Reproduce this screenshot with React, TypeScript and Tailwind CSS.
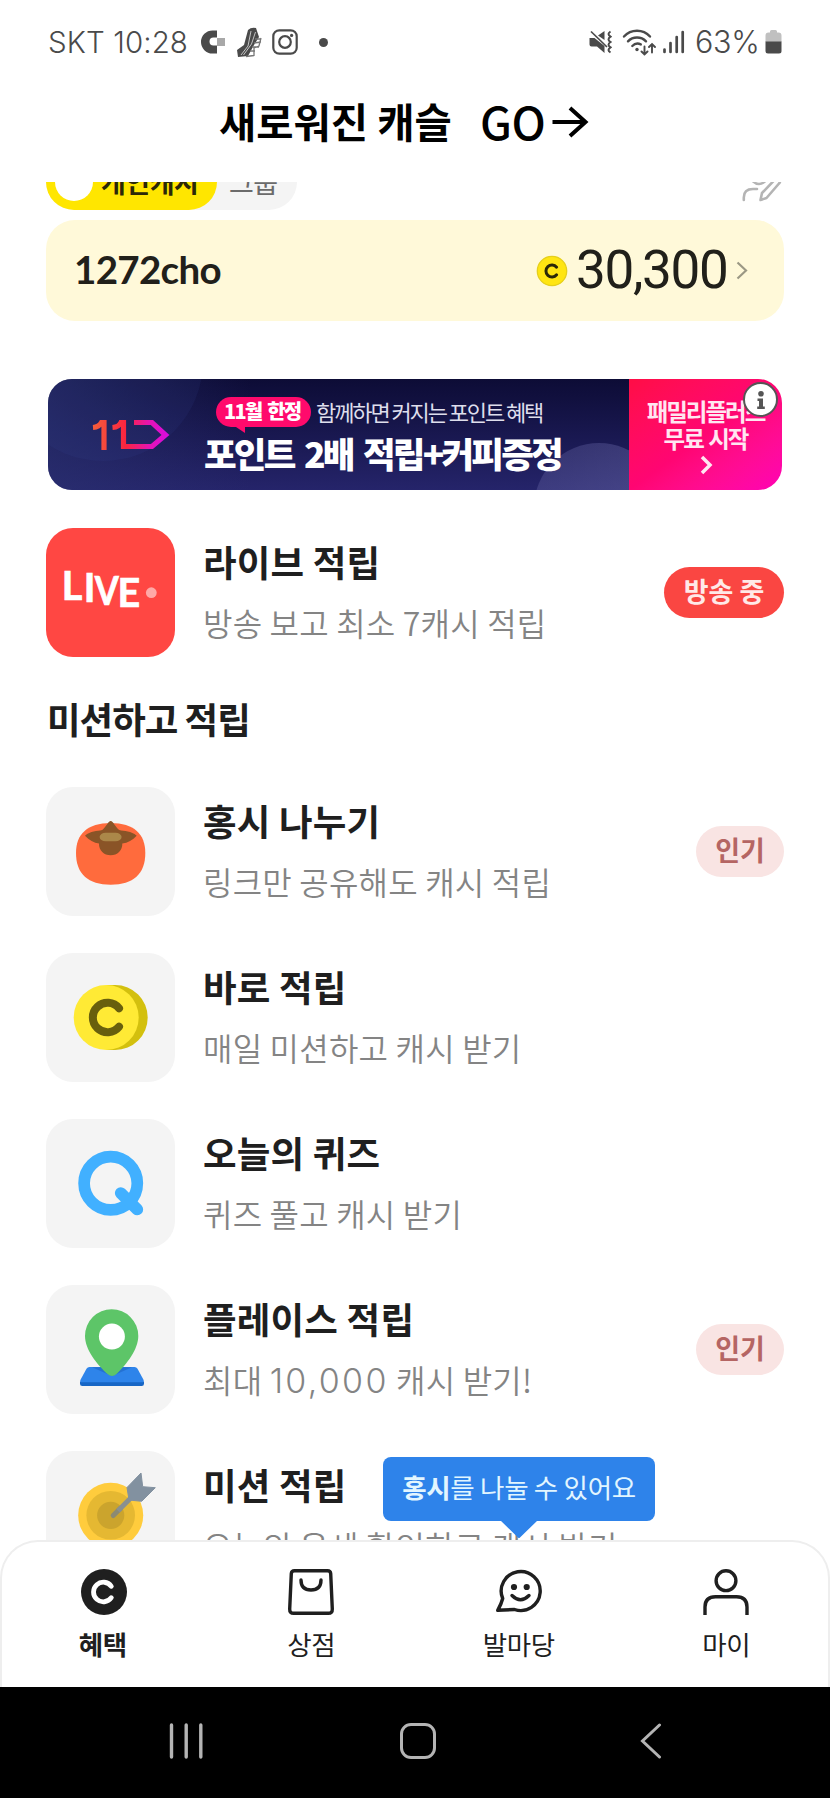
import type { ReactNode } from "react";
import clsx from "clsx";

type Mission = {
  title: string;
  desc: ReactNode;
  icon: ReactNode;
  badge?: string;
};

function LiveIcon() {
  return (
    <svg viewBox="0 0 129 129" className="size-full">
      <g fill="#fff" stroke="#fff" strokeWidth="0.700" fontFamily="Lato, sans-serif" fontWeight="700" fontSize="39.5">
        <text x="15.8" y="71.7">L</text>
        <text x="37.8" y="73.5">I</text>
        <text x="48.8" y="77.3" textLength="24" lengthAdjust="spacingAndGlyphs">V</text>
        <text x="71.4" y="79.4">E</text>
      </g>
      <circle cx="105.3" cy="64.7" r="5.4" fill="#ffa9a7" />
    </svg>
  );
}

function PersimmonIcon() {
  return (
    <svg viewBox="0 0 129 129" className="size-full">
      <path d="M64.7 36C88 36 99.3 47 99.3 66c0 21-12 31.7-34.6 31.7S30 87 30 66c0-19 11.4-30 34.7-30Z" fill="#ff6b3d" />
      <path
        d="M64.7 34c2.500 0 4.500 6 8.500 9 5 1.200 12 .8 17.500 5.700-4 4.500-9 7-14.400 7.800.3 7-5 11.800-11.600 11.800S52.700 63.500 53 56.500C48 55.700 43 53.200 39 48.700 44.500 43.800 51 44.200 56.200 43c4-3 6-9 8.500-9Z"
        fill="#8a5427"
      />
      <rect x="53.600" y="45.700" width="22" height="8.600" rx="6" ry="4.300" fill="#ab8749" />
    </svg>
  );
}

function CoinIcon() {
  return (
    <svg viewBox="0 0 129 129" className="size-full">
      <path d="M60 32h9.200a32.500 32.500 0 0 1 0 65H60Z" fill="#d3c00e" />
      <circle cx="60.200" cy="64.500" r="32.500" fill="#ffea35" />
      <path d="M73 55.300a14.700 14.700 0 1 0 0 18.400" fill="none" stroke="#685f0d" strokeWidth="8" strokeLinecap="round" />
    </svg>
  );
}

function QuizIcon() {
  return (
    <svg viewBox="0 0 129 129" className="size-full" fill="none" stroke="#41b0ff" strokeWidth="11.700" strokeLinecap="round">
      <circle cx="64.700" cy="64.300" r="26.600" />
      <path d="m74.700 74 16.600 16.500" />
    </svg>
  );
}

function PlaceIcon() {
  return (
    <svg viewBox="0 0 129 129" className="size-full">
      <path d="M34 96.500h64v2.200q0 2.300-2.300 2.300H36.300Q34 101 34 98.700Z" fill="#1766c5" />
      <path d="M43.500 82h45q2 0 3 1.700l6 11q1 2.600-1.700 2.600H36.200q-2.700 0-1.700-2.600l6-11q1-1.700 3-1.700Z" fill="#2e84ea" />
      <path d="M46 82.300h40L66 91Z" fill="#2471d2" />
      <path d="M65.700 24.300A26.600 26.600 0 0 0 39 51c0 13.500 12 28.500 22.500 38q4.500 4 9 0C80.500 79.500 92.300 64.500 92.300 51a26.600 26.600 0 0 0-26.600-26.700Z" fill="#5dc568" />
      <circle cx="65.900" cy="51.600" r="13" fill="#fff" />
    </svg>
  );
}

function TargetIcon() {
  return (
    <svg viewBox="0 0 129 129" className="size-full">
      <circle cx="64.700" cy="64.300" r="32.500" fill="#ffcc3d" />
      <circle cx="64.700" cy="64.300" r="24.300" fill="#e5b832" />
      <circle cx="64.700" cy="64.300" r="13.600" fill="#cba42d" />
      <path d="M67.200 64.500 74 57.700" stroke="#8c8a72" strokeWidth="5" strokeLinecap="round" />
      <path d="m72 59.700 14-14" stroke="#8a9090" strokeWidth="5" />
      <path d="M81 36.500 95 22l1.700 13.700 12.600 1L95.700 50.300 83 49Z" fill="#8291a0" stroke="#8291a0" strokeWidth="1" strokeLinejoin="round" />
    </svg>
  );
}

const missions: Mission[] = [
  { title: "홍시 나누기", desc: "링크만 공유해도 캐시 적립", icon: <PersimmonIcon />, badge: "인기" },
  { title: "바로 적립", desc: "매일 미션하고 캐시 받기", icon: <CoinIcon /> },
  { title: "오늘의 퀴즈", desc: "퀴즈 풀고 캐시 받기", icon: <QuizIcon /> },
  {
    title: "플레이스 적립",
    desc: (
      <>
        최대 <span className="font-['Inter'] text-[34px] font-light tracking-[2.300px]">10,000</span> 캐시 받기!
      </>
    ),
    icon: <PlaceIcon />,
    badge: "인기",
  },
  { title: "미션 적립", desc: "오늘의 운세 확인하고 캐시 받기", icon: <TargetIcon /> },
];

function MissionRow({ title, desc, icon, badge, live }: Mission & { live?: boolean }) {
  return (
    <div className="flex h-[129px] shrink-0 items-center">
      <div className={clsx("size-[129px] shrink-0 rounded-[27px]", live ? "bg-[#ff4743]" : "bg-[#f4f4f4]")}>{icon}</div>
      <div className="ml-[28px] flex flex-1 flex-col gap-[18px] pb-[4px] whitespace-nowrap">
        <div className="h-11 text-[36.500px] leading-[44px] font-bold tracking-[0.200px] text-[#1f1f1f]">{title}</div>
        <div className="h-10 text-[32px] leading-10 font-[350] tracking-[0.200px] text-[#848484]">{desc}</div>
      </div>
      {badge && (
        <div
          className={clsx(
            "flex h-[51px] items-center justify-center rounded-full pb-[5px] text-[27px] leading-none font-bold",
            live ? "w-[120px] bg-[#fa4642] text-[#ffe9e8]" : "w-[88px] bg-[#f9e4e3] text-[#b56563]"
          )}
        >
          {badge}
        </div>
      )}
    </div>
  );
}

function StatusBar() {
  return (
    <div className="flex h-[84px] items-center justify-between pr-12 pl-[48px] font-['Inter'] text-[29.500px] text-[#4a4a4a]">
      <div className="flex items-center">
        <span className="w-[153px] font-[350] tracking-[0.100px] whitespace-nowrap">SKT 10:28</span>
        <svg width="25" height="24" viewBox="0 0 25 24">
          <path d="M16 .5h-4.500a11.500 11.500 0 0 0 0 23H16v-8h-3.500a4 4 0 0 1 0-8H16Z" fill="#4a4a4a" />
          <rect x="16" y="8" width="8" height="8" fill="#a8a8a8" />
        </svg>
        <svg width="25" height="31" viewBox="0 0 25 31" className="ml-[11px]">
          <path d="M11 3Q14 0 19 1l3 9-5 8-6 11-10 1-1-7 7-5Z" fill="#4a4a4a" />
          <path d="m14 4-3 15-7 9M18.500 5l-4 12-8 11" stroke="#c4c4c4" strokeWidth="1" fill="none" />
          <path d="m18 12 6 0M17 16l7-1M15 20l7 0M13 24l5 0M9 29.500l8-1M24 11l-2 8-5 2v8" stroke="#777" strokeWidth="1.300" fill="none" />
        </svg>
        <svg width="26" height="26" viewBox="0 0 26 26" fill="none" stroke="#4a4a4a" strokeWidth="2.200" className="ml-[10px]">
          <rect x="1.300" y="1.300" width="23.400" height="23.400" rx="6" />
          <circle cx="13" cy="13" r="5.800" />
          <circle cx="19.600" cy="6.400" r="1.600" fill="#4a4a4a" stroke="none" />
        </svg>
        <span className="ml-[21px] size-[9px] rounded-full bg-[#4a4a4a]" />
      </div>
      <div className="flex items-center">
        <svg width="23" height="24" viewBox="0 0 23 24">
          <path d="M9 5.500 15.500 1v9ZM.5 8h5L15.500 16v7L8 16.500H2.500q-2 0-2-2Z" fill="#4a4a4a" />
          <path d="m2 1.500 16 15.500" stroke="#4a4a4a" strokeWidth="1.700" />
          <path d="M21.500 1.500q-4 2.600 0 5.200-4 2.700 0 5.300-4 2.700 0 5.300-4 2.600 0 5.200" fill="none" stroke="#4a4a4a" strokeWidth="2" />
        </svg>
        <svg width="34" height="27" viewBox="0 0 34 27" fill="none" stroke="#4a4a4a" strokeWidth="2.400" strokeLinecap="round" className="ml-[10px]">
          <path d="M2 7.500a17.500 17.500 0 0 1 26 0M6 12.300a12.500 12.500 0 0 1 18 0M10.300 17a7.500 7.500 0 0 1 8.500-1.600" />
          <circle cx="15" cy="20.500" r="1.700" fill="#4a4a4a" stroke="none" />
          <path d="M22.500 17.500v8m-3-3 3 3 3-3M30 23.500v-8.500m-3 3 3-3 3 3" strokeWidth="1.900" />
        </svg>
        <svg width="23" height="24" viewBox="0 0 23 24" stroke="#4a4a4a" strokeWidth="2.700" strokeLinecap="round" className="ml-[6px]">
          <path d="M2.500 19.500v2.500M8.500 13v9M14.700 7v15M20.700 2v20" />
        </svg>
        <span className="ml-[10px] w-[66px] text-[30.500px] font-[350] tracking-[-0.300px] whitespace-nowrap">63%</span>
        <svg width="17" height="24" viewBox="0 0 17 24" className="ml-[4px]">
          <path d="M5 1.500Q5 0 6.500 0h4Q12 0 12 1.500V2.500h1.500q3 0 3 3V12H.5V5.500q0-3 3-3H5Z" fill="#c0c0c0" />
          <path d="M.5 11.500h16V21q0 2.500-2.500 2.500H3Q.5 23.500.5 21Z" fill="#4a4a4a" />
        </svg>
      </div>
    </div>
  );
}

function Banner() {
  return (
    <div className="relative mx-[2px] mt-[58px] flex h-[111px] shrink-0 overflow-hidden rounded-[24px] text-white">
      <div className="relative flex w-[581px] overflow-hidden bg-linear-to-b from-[#0d0c36] to-[#25246a]">
        <div className="absolute inset-0 bg-linear-to-r from-[#2b3272]/60 via-transparent via-35% to-transparent" />
        <div className="absolute -top-[118px] -left-[45px] size-[200px] rounded-full bg-[#3c4a9c]/12" />
        <div className="absolute top-[64px] left-[486px] size-[130px] rounded-full bg-linear-to-br from-[#6766a6]/30 to-[#6766a6]/60" />
        <svg viewBox="0 0 80 34" width="80" height="34" className="relative mt-[39px] ml-[43px] shrink-0" fill="none" strokeWidth="5.200">
          <defs>
            <linearGradient id="eleven" gradientUnits="userSpaceOnUse" x1="0" y1="0" x2="78" y2="0">
              <stop offset="0" stopColor="#f4603a" />
              <stop offset=".45" stopColor="#fb2440" />
              <stop offset=".75" stopColor="#e414b4" />
              <stop offset="1" stopColor="#d60ce0" />
            </linearGradient>
          </defs>
          <path d="M2 9.500Q8 9 10.500 4.500H13V32M21.500 9.500Q28 9 30 4.500H32.500V28.500H61L74.500 17 61 4.500H43" stroke="url(#eleven)" />
        </svg>
        <div className="relative ml-[33px] flex flex-col whitespace-nowrap">
          <div className="mt-[18px] ml-3 flex h-[30px] items-center">
            <div className="relative flex h-[30px] w-[95px] items-center rounded-full bg-[#ff0a6c] pb-[2px] pl-2">
              <span className="text-[20px] leading-none font-black tracking-[-1.800px] [word-spacing:3px]">11월 한정</span>
              <svg width="12" height="8" className="absolute top-[28px] left-[17px]">
                <path d="M0 0h12v8Z" fill="#ff0a6c" />
              </svg>
            </div>
            <span className="ml-[5px] pb-[2px] text-[22px] leading-none tracking-[-2.100px] text-[#dedeec]">함께하면 커지는 포인트 혜택</span>
          </div>
          <div className="mt-[2px] h-[48px] text-[35.500px] leading-[48px] font-black tracking-[-2.800px] [word-spacing:5px]">포인트 2배 적립+커피증정</div>
        </div>
      </div>
      <div className="flex flex-1 flex-col items-center bg-linear-to-br from-[#ff0d45] via-[#ff0572] to-[#ff00b4] pt-[19px] text-[23.500px] leading-[27px] font-bold tracking-[-2px] [word-spacing:2px] whitespace-nowrap text-[#ffe6f1]">
        <div>패밀리플러스</div>
        <div>무료 시작</div>
        <svg width="14" height="20" viewBox="0 0 14 20" className="mt-[3px]" fill="none" stroke="#ffe6f1" strokeWidth="3.500">
          <path d="m3 2 8 8-8 8" />
        </svg>
      </div>
      <div className="absolute top-[3px] right-[4px] flex size-[35px] items-center justify-center rounded-full border-2 border-[#555] bg-white">
        <svg width="8" height="18" viewBox="0 0 8 18" fill="#555">
          <circle cx="4" cy="2.800" r="2.800" />
          <path d="M.5 7.500H6v8h1.800V18H.2v-2.500H2v-5.500H.5Z" />
        </svg>
      </div>
    </div>
  );
}

const tabs = [
  {
    label: "혜택",
    icon: (
      <>
        <circle cx="23" cy="23" r="23" fill="#1f1f1f" stroke="none" />
        <path d="M30.300 17.300a9.800 9.800 0 1 0 0 11.400" stroke="#fff" strokeWidth="4.800" strokeLinecap="round" />
      </>
    ),
  },
  {
    label: "상점",
    icon: (
      <>
        <path d="M6.500 1.700h33q3 0 3.200 3l1.600 35.300q.2 4.300-4 4.300H5.700q-4.200 0-4-4.300L3.300 4.700q.2-3 3.200-3Z" />
        <path d="M13 11q0 10 10 10t10-10" strokeLinecap="round" />
      </>
    ),
  },
  {
    label: "발마당",
    icon: (
      <>
        <path d="M6.700 29.500A19.500 19.500 0 1 1 18.500 40.500Q14 40.700 1.700 41.300Q5.500 34.500 6.700 29.500Z" strokeLinejoin="round" />
        <g fill="#1f1f1f" stroke="none">
          <circle cx="18" cy="18" r="3.100" />
          <circle cx="30.700" cy="18" r="3.100" />
        </g>
        <path d="M16 26.500q8.500 8.500 17 0" strokeLinecap="round" />
      </>
    ),
  },
  {
    label: "마이",
    icon: (
      <>
        <circle cx="23" cy="11.700" r="9.900" />
        <path d="M2 46V38Q2 27.700 12.500 27.700h21Q44 27.700 44 38v8" />
      </>
    ),
  },
];

function TabBar() {
  return (
    <nav className="h-[147px] shrink-0 rounded-t-[38px] border-2 border-b-0 border-[#eeeeee] bg-white pt-[27px]">
      <div className="-mx-[2px] flex">
        {tabs.map((tab, i) => (
          <div key={tab.label} className="flex flex-1 flex-col items-center">
            <svg width="46" height="46" viewBox="0 0 46 46" fill="none" stroke="#1f1f1f" strokeWidth="3.400" className="overflow-visible">
              {tab.icon}
            </svg>
            <span className={clsx("mt-[13px] text-[26.500px] leading-[32px] tracking-[-0.300px] text-[#1f1f1f]", i === 0 ? "mr-[2px] font-bold" : "font-normal")}>
              {tab.label}
            </span>
          </div>
        ))}
      </div>
    </nav>
  );
}

export default function App() {
  return (
    <div className="flex h-[1798px] w-[830px] flex-col overflow-hidden bg-white font-['Noto_Sans_CJK_KR',sans-serif]">
      <StatusBar />
      <header className="flex h-[98px] shrink-0 pb-[23px] pl-[219px] whitespace-nowrap text-black">
        <span className="w-[261px] text-[40.500px] leading-[73px] font-bold">새로워진 캐슬</span>
        <span className="w-[72px] text-[45.500px] leading-[73px] font-medium tracking-[-0.500px]">GO</span>
        <svg width="37" height="32" viewBox="0 0 37 32" fill="none" stroke="#000" strokeWidth="4" className="mt-[22px]">
          <path d="M.5 16h33M18 2l15.500 14L18 30" />
        </svg>
      </header>

      <main className="relative flex min-h-0 flex-1 flex-col overflow-hidden px-[46px]">
        <div className="-mt-7 flex h-14 shrink-0 items-center justify-between">
          <div className="flex h-14 w-[251px] items-center rounded-full bg-[#f4f4f4] text-[27px]">
            <div className="flex h-14 w-[171px] items-center rounded-full bg-[#ffe600] pl-[9px]">
              <span className="size-[38px] rounded-full bg-white" />
              <span className="ml-[8px] font-bold tracking-[-0.500px] whitespace-nowrap text-[#2b2808]">개인캐시</span>
            </div>
            <span className="ml-[12px] tracking-[-0.500px] text-[#6b6b6b]">그룹</span>
          </div>
          <svg width="40" height="40" viewBox="0 0 40 40" fill="none" stroke="#b4b4b4" strokeWidth="2.600" strokeLinecap="round" strokeLinejoin="round" className="mr-[2px]">
            <circle cx="17" cy="14" r="8" />
            <path d="M1.800 38v-2.500Q1.800 27 11 27h4M18.500 38l1.500-7L33 17.500q2-2 4 0t0 4L24.500 36Z" />
          </svg>
        </div>

        <section className="mt-[10px] flex h-[101px] shrink-0 items-center rounded-[29px] bg-[#fff9d9] pl-[28px] text-[#21201a]">
          <span className="w-[462px] pb-[2px] font-['Lato'] text-[38.500px] leading-none font-bold tracking-[-0.700px]">1272cho</span>
          <svg width="32" height="32" viewBox="0 0 32 32">
            <circle cx="16" cy="16" r="14.700" fill="#ffe512" stroke="#e5cf1c" strokeWidth="1.300" />
            <path d="M20.600 12.200a6 6 0 1 0 0 7.600" fill="none" stroke="#2a2708" strokeWidth="3" strokeLinecap="round" />
          </svg>
          <span className="ml-[8px] w-[160px] font-['Roboto'] text-[53px] leading-none font-normal tracking-[-1.300px]">30,300</span>
          <svg width="12" height="19" viewBox="0 0 12 19" fill="none" stroke="#9b9884" strokeWidth="2.200">
            <path d="m1.500 1.500 8.500 8-8.500 8" />
          </svg>
        </section>

        <Banner />

        <div className="mt-[38px] flex shrink-0 flex-col">
          <MissionRow
            live
            title="라이브 적립"
            desc="방송 보고 최소 7캐시 적립"
            icon={<LiveIcon />}
            badge="방송 중"
          />
        </div>
        <h2 className="mt-[40px] mb-[46px] ml-[1px] h-11 shrink-0 text-[36.500px] leading-[44px] font-bold tracking-[-1px] text-[#1f1f1f]">미션하고 적립</h2>
        <div className="flex shrink-0 flex-col gap-[37px]">
          {missions.map((m) => (
            <MissionRow key={m.title} {...m} />
          ))}
        </div>

        {/* coach mark over the 발마당 tab */}
        <div className="absolute top-[1275px] left-[383px] flex h-[64px] w-[272px] items-center justify-center rounded-[8px] bg-[#2e83ea] pb-[4px] text-[26.500px] leading-none tracking-[-0.300px] whitespace-nowrap text-[#e2f6ff]">
          <span className="font-bold">홍시</span>
          <span>를 나눌 수 있어요</span>
          <svg width="38" height="19" viewBox="0 0 38 19" className="absolute top-[63px] left-[117px]">
            <path d="M0 0h38L20 17.500q-1 1-2 0Z" fill="#2e83ea" />
          </svg>
        </div>
      </main>

      <TabBar />

      <footer className="flex h-[111px] shrink-0 items-center bg-black pb-[3px] pl-[169px]">
        <svg width="36" height="36" viewBox="0 0 36 36" stroke="#b4b4b4" strokeWidth="3.400" strokeLinecap="round">
          <path d="M2.500 2v32M17.200 2v32M31.800 2v32" />
        </svg>
        <span className="ml-[195px] size-[36px] rounded-[11px] border-[3px] border-[#b4b4b4]" />
        <svg width="22" height="36" viewBox="0 0 22 36" fill="none" stroke="#b4b4b4" strokeWidth="3" strokeLinecap="round" className="ml-[204px]">
          <path d="M19.500 2 2.500 18l17 16" />
        </svg>
      </footer>
    </div>
  );
}
